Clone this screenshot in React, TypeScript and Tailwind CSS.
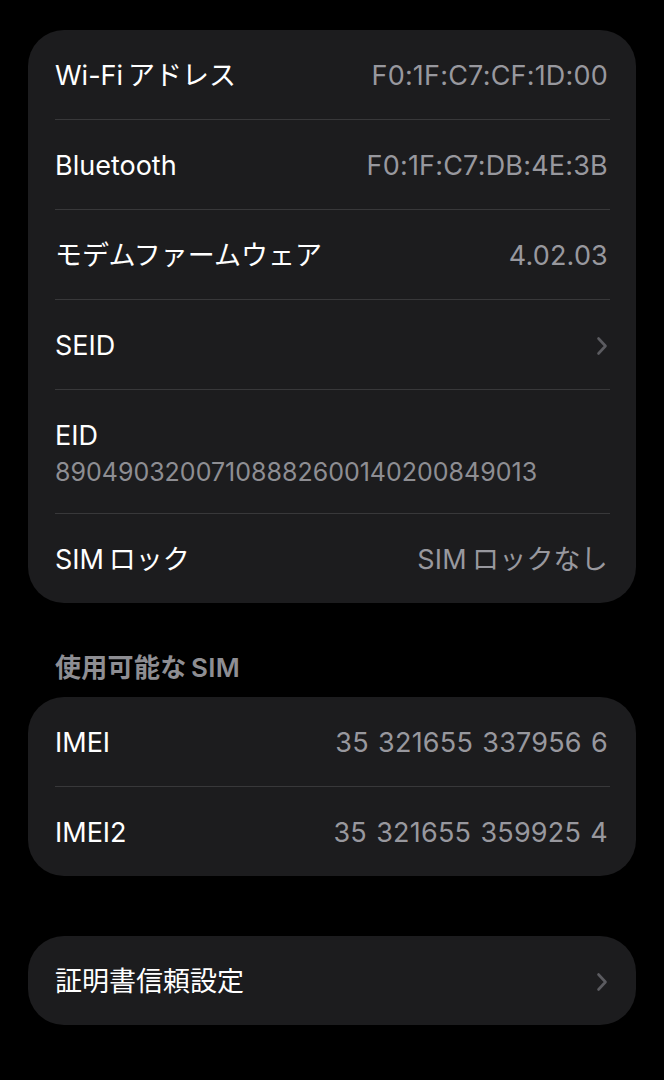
import React from "react";

const font = { fontFamily: 'Inter, "Noto Sans CJK JP", sans-serif' };

function Chevron() {
  return (
    <svg width="12" height="20" viewBox="0 0 12 20" fill="none" className="shrink-0">
      <path d="M2.5 2.5 L9.5 10 L2.5 17.5" stroke="#5b5b60" strokeWidth="2.6" strokeLinecap="round" strokeLinejoin="round" />
    </svg>
  );
}

function Row({ label, value, chevron }: { label: string; value?: string; chevron?: boolean }) {
  return (
    <div className="flex h-[89px] items-center justify-between pl-[27px] pr-[28px] pt-[3px]">
      <span className="text-[27px] text-white">{label}</span>
      {value && <span className="text-[27px] tracking-[0.2px] text-[#98989e] [word-spacing:1.5px]">{value}</span>}
      {chevron && <Chevron />}
    </div>
  );
}

function Sep() {
  return <div className="ml-[27px] mr-[26px] h-px bg-[#38383a]" />;
}

export default function App() {
  return (
    <div className="min-h-[1080px] bg-black px-[28px] pt-[30px]" style={font}>
      <div className="rounded-[36px] bg-[#1c1c1e]">
        <Row label={"Wi-Fi\u2009アドレス"} value="F0:1F:C7:CF:1D:00" />
        <Sep />
        <Row label="Bluetooth" value="F0:1F:C7:DB:4E:3B" />
        <Sep />
        <Row label="モデムファームウェア" value="4.02.03" />
        <Sep />
        <Row label="SEID" chevron />
        <Sep />
        <div className="flex h-[123px] flex-col justify-center pl-[27px] pr-[28px] pt-[4px]">
          <span className="text-[27px] leading-[37px] text-white">EID</span>
          <span className="text-[25px] leading-[37px] text-[#8e8e93]">89049032007108882600140200849013</span>
        </div>
        <Sep />
        <Row label={"SIM\u2009ロック"} value={"SIM\u2009ロックなし"} />
      </div>

      <div className="flex h-[94px] items-end pb-[10px] pl-[27px]">
        <span className="text-[26px] font-semibold tracking-[0.3px] text-[#8e8e93]">{"使用可能な\u2009SIM"}</span>
      </div>

      <div className="rounded-[36px] bg-[#1c1c1e]">
        <Row label="IMEI" value="35 321655 337956 6" />
        <Sep />
        <Row label="IMEI2" value="35 321655 359925 4" />
      </div>

      <div className="mt-[60px] rounded-[36px] bg-[#1c1c1e]">
        <Row label="証明書信頼設定" chevron />
      </div>
    </div>
  );
}
